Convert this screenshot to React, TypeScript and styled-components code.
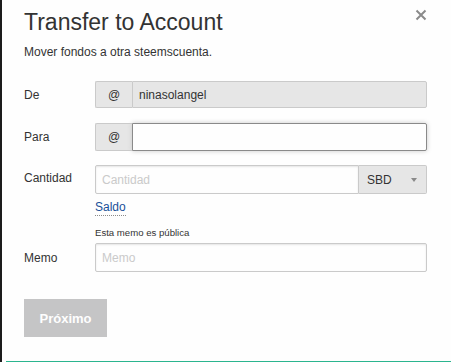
import React from "react";
import styled, { createGlobalStyle } from "styled-components";

const GlobalStyle = createGlobalStyle`
  html, body {
    margin: 0;
    padding: 0;
    background: #fefefe;
  }
  body {
    font-family: "Liberation Sans", Arial, sans-serif;
    color: #333;
  }
  * {
    box-sizing: border-box;
  }
`;

const Frame = styled.div`
  width: 451px;
  height: 362px;
  border-left: 2px solid #1c1c1c;
  position: relative;
  overflow: hidden;
  background: #fefefe;
`;

const BottomEdge = styled.div`
  position: absolute;
  left: 4px;
  right: 0;
  bottom: 0;
  height: 1px;
  background: #2bb58f;
`;

const Panel = styled.div`
  padding: 8px 24px 0 22px;
  position: relative;
`;

const Title = styled.h3`
  margin: 0;
  font-size: 23px;
  line-height: 28px;
  font-weight: 400;
  color: #333;
`;

const Subtitle = styled.p`
  margin: 9px 0 0;
  font-size: 12px;
  line-height: 15px;
  color: #333;
`;

const CloseButton = styled.button`
  position: absolute;
  top: 9px;
  right: 24px;
  width: 12px;
  height: 12px;
  padding: 0;
  border: 0;
  background: none;
  cursor: pointer;
  display: flex;
`;

const Form = styled.div`
  margin-top: 21px;
  display: flex;
  flex-direction: column;
`;

const Row = styled.div<{ $gap: number }>`
  display: flex;
  align-items: center;
  margin-bottom: ${(p) => p.$gap}px;
`;

const Label = styled.label<{ $top?: boolean }>`
  width: 71px;
  flex: none;
  font-size: 12px;
  color: #333;
  align-self: ${(p) => (p.$top ? "flex-start" : "center")};
  padding-top: ${(p) => (p.$top ? "6px" : "0")};
`;

const Column = styled.div`
  flex: 1;
  display: flex;
  flex-direction: column;
`;

const Group = styled.div<{ $h: number }>`
  display: flex;
  height: ${(p) => p.$h}px;
`;

const Prefix = styled.span`
  width: 37px;
  flex: none;
  display: flex;
  align-items: center;
  justify-content: center;
  background: #e6e6e6;
  border: 1px solid #cacaca;
  border-right: 0;
  border-radius: 2px 0 0 2px;
  font-size: 12px;
  color: #333;
`;

const Input = styled.input<{ $focus?: boolean; $joined?: boolean }>`
  flex: 1;
  min-width: 0;
  height: 100%;
  margin: 0;
  padding: 0 6px;
  font-family: "Liberation Sans", Arial, sans-serif;
  font-size: 12px;
  color: #333;
  background: #fefefe;
  border: 1px solid ${(p) => (p.$focus ? "#8a8a8a" : "#cacaca")};
  border-radius: ${(p) => (p.$joined ? "0 2px 2px 0" : "2px")};
  box-shadow: ${(p) =>
    p.$focus ? "0 0 5px #cacaca" : "inset 0 1px 2px rgba(10,10,10,0.1)"};
  outline: none;
  &::placeholder {
    color: #cacaca;
  }
  &:disabled {
    background: #e6e6e6;
    box-shadow: none;
  }
`;

const AmountInput = styled(Input)`
  border-radius: 2px 0 0 2px;
`;

const Select = styled.div`
  width: 68px;
  flex: none;
  display: flex;
  align-items: center;
  justify-content: space-between;
  padding: 0 9px 0 8px;
  background: #e6e6e6;
  border: 1px solid #cacaca;
  border-left: 0;
  border-radius: 0 2px 2px 0;
  font-size: 12px;
  color: #333;
`;

const Caret = styled.span`
  width: 0;
  height: 0;
  border-left: 3px solid transparent;
  border-right: 3px solid transparent;
  border-top: 4px solid #8a8a8a;
`;

const Balance = styled.a`
  align-self: flex-start;
  margin-top: 6px;
  font-size: 12px;
  line-height: 15px;
  color: #1a5099;
  text-decoration: none;
  border-bottom: 1px dotted #8a8a8a;
  cursor: pointer;
`;

const Hint = styled.div`
  margin: 0 0 4px 71px;
  font-size: 9.6px;
  line-height: 12px;
  color: #333;
`;

const Submit = styled.button`
  margin-top: 27px;
  width: 83px;
  height: 38px;
  border: 0;
  background: #c5c5c6;
  color: #fefefe;
  font-family: "Liberation Sans", Arial, sans-serif;
  font-weight: 700;
  font-size: 13px;
  cursor: not-allowed;
`;

export default function App() {
  return (
    <>
      <GlobalStyle />
      <Frame>
        <Panel>
          <Title>Transfer to Account</Title>
          <Subtitle>Mover fondos a otra steemscuenta.</Subtitle>
          <CloseButton aria-label="Close">
            <svg width="12" height="12" viewBox="0 0 12 12">
              <path
                d="M1.5 1.5 L10.5 10.5 M10.5 1.5 L1.5 10.5"
                stroke="#8a8a8a"
                strokeWidth="2"
              />
            </svg>
          </CloseButton>

          <Form>
            <Row $gap={15}>
              <Label>De</Label>
              <Column>
                <Group $h={27}>
                  <Prefix>@</Prefix>
                  <Input $joined disabled value="ninasolangel" readOnly />
                </Group>
              </Column>
            </Row>

            <Row $gap={14}>
              <Label>Para</Label>
              <Column>
                <Group $h={28}>
                  <Prefix>@</Prefix>
                  <Input $joined $focus />
                </Group>
              </Column>
            </Row>

            <Row $gap={11}>
              <Label $top>Cantidad</Label>
              <Column>
                <Group $h={29}>
                  <AmountInput placeholder="Cantidad" />
                  <Select>
                    SBD
                    <Caret />
                  </Select>
                </Group>
                <Balance>Saldo</Balance>
              </Column>
            </Row>

            <Hint>Esta memo es pública</Hint>
            <Row $gap={0}>
              <Label>Memo</Label>
              <Column>
                <Group $h={29}>
                  <Input placeholder="Memo" />
                </Group>
              </Column>
            </Row>
          </Form>

          <Submit>Próximo</Submit>
        </Panel>
        <BottomEdge />
      </Frame>
    </>
  );
}
